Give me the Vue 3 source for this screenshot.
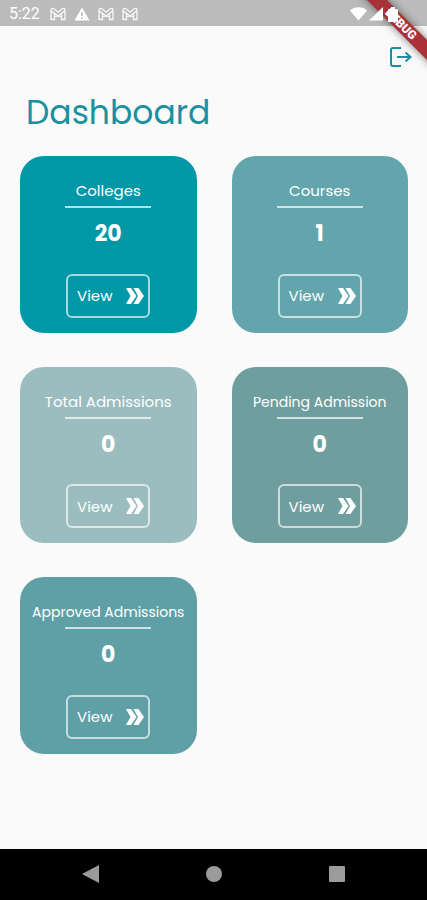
<script setup>
const cards = [
  { title: 'Colleges', count: 20, tone: 'deep' },
  { title: 'Courses', count: 1, tone: 'teal' },
  { title: 'Total Admissions', count: 0, tone: 'pale' },
  { title: 'Pending Admission', count: 0, tone: 'sage', small: true },
  { title: 'Approved Admissions', count: 0, tone: 'sea', small: true },
]
const notices = ['mail', 'warning', 'mail', 'mail']
</script>

<template>
  <div class="screen">
    <header class="status">
      <span class="time">5:22</span>
      <span class="notices">
        <svg v-for="(n, i) in notices" :key="i" width="16" height="14" viewBox="0 0 16 14" aria-hidden="true">
          <path
            v-if="n === 'mail'"
            d="M1 12.500V3.200C1 1.200 3 .8 4.200 2L8 5.200L11.800 2C13 .8 15 1.200 15 3.200V12.500H11.500V10L8 8.800L4.500 10V12.500Z M1.500 4L8 9 M14.500 4L8 9 M4.500 6.500V10 M11.500 6.500V10"
            fill="none" stroke="#f8f8f8" stroke-width="1.300" stroke-linejoin="round"
          />
          <path v-else d="M8 .5L15.500 13.500H.5Z M7.200 5V9H8.800V5Z M7.200 10.300V11.900H8.800V10.300Z" fill="#fff" fill-rule="evenodd" />
        </svg>
      </span>
      <span class="system">
        <svg width="17" height="14" viewBox="0 0 17 14" aria-hidden="true">
          <path d="M0 3.500C5-.8 12-.8 17 3.500L8.500 13.500Z" fill="#fff" />
        </svg>
        <svg width="14" height="14" viewBox="0 0 14 14" aria-hidden="true">
          <path d="M14 0V13.500H0Z" fill="#fff" />
        </svg>
        <svg class="battery" width="10" height="15" viewBox="0 0 10 15" aria-hidden="true">
          <path d="M3 0H7V2H9Q10 2 10 3V14Q10 15 9 15H1Q0 15 0 14V3Q0 2 1 2H3Z" fill="#fff" />
        </svg>
      </span>
    </header>
    <div class="corner"><span class="ribbon">DEBUG</span></div>

    <main class="content">
      <div class="toolbar">
        <button class="logout" type="button" aria-label="Log out">
          <svg width="24" height="22" viewBox="0 0 24 22" aria-hidden="true">
            <g fill="none" stroke="#1b91a0" stroke-width="2">
              <path d="M12 2H4Q2 2 2 4V18Q2 20 4 20H12" />
              <path d="M8 11H21M16.500 6.500L21.500 11L16.500 15.500" />
            </g>
          </svg>
        </button>
      </div>
      <h1>Dashboard</h1>
      <div class="grid">
        <section v-for="c in cards" :key="c.title" class="card" :class="c.tone">
          <h2 :class="{ small: c.small }">{{ c.title }}</h2>
          <span class="rule"></span>
          <strong>{{ c.count }}</strong>
          <button class="view" type="button">
            <span>View</span>
            <svg width="20" height="18" viewBox="0 0 20 18" aria-hidden="true">
              <path d="M1 1H6L11.500 9L6 17H1L5.500 9ZM8.500 1H13.500L19 9L13.500 17H8.500L13 9Z" fill="#fff" />
            </svg>
          </button>
        </section>
      </div>
    </main>

    <nav class="navbar">
      <button type="button" aria-label="Back">
        <svg width="18" height="18" viewBox="0 0 18 18"><path d="M0 9L17 0V18Z" fill="#9b9b9b" /></svg>
      </button>
      <button type="button" aria-label="Home">
        <svg width="18" height="18" viewBox="0 0 18 18"><circle cx="9" cy="9" r="8" fill="#9b9b9b" /></svg>
      </button>
      <button type="button" aria-label="Recent apps">
        <svg width="18" height="18" viewBox="0 0 18 18"><rect x="1" y="1" width="16" height="16" rx="1" fill="#9b9b9b" /></svg>
      </button>
    </nav>
  </div>
</template>

<style>
body {
  margin: 0;
}
</style>

<style scoped>
.screen {
  position: relative;
  display: flex;
  flex-direction: column;
  min-height: 100vh;
  background: #fafafa;
  font-family: Poppins, Inter, sans-serif;
}
button {
  display: flex;
  align-items: center;
  justify-content: center;
  padding: 0;
  border: 0;
  background: none;
  font: inherit;
  color: inherit;
}
.status {
  display: flex;
  align-items: center;
  box-sizing: border-box;
  height: 26px;
  padding: 2px 29px 0 9px;
  background: #bbb;
  color: #fff;
}
.time {
  font: 16px/20px Roboto, sans-serif;
}
.notices {
  display: flex;
  gap: 8px;
  margin-left: 10px;
}
.system {
  position: relative;
  z-index: 2;
  display: flex;
  align-items: center;
  gap: 2px;
  margin-left: auto;
}
.battery {
  margin-left: 3px;
}
.corner {
  position: absolute;
  top: 0;
  right: 0;
  z-index: 1;
  width: 80px;
  height: 80px;
  overflow: hidden;
  pointer-events: none;
}
.ribbon {
  position: absolute;
  top: 17px;
  right: -34px;
  width: 120px;
  background: #a83238;
  box-shadow: 0 0 8px rgba(0, 0, 0, 0.5);
  color: #fff;
  font: 900 12px/14px Roboto, sans-serif;
  text-align: center;
  transform: rotate(45deg);
}
.content {
  flex: 1;
  padding: 18px 19px 32px 20px;
}
.toolbar {
  display: flex;
  justify-content: flex-end;
}
.logout {
  width: 30px;
  height: 26px;
  margin-right: -8px;
}
h1 {
  margin: 19px 0 19px 6px;
  color: #1b91a0;
  font-size: 33px;
  font-weight: 400;
  line-height: 48px;
}
.grid {
  display: grid;
  grid-template-columns: 1fr 1fr;
  gap: 34px 35px;
}
.card {
  display: flex;
  flex-direction: column;
  align-items: center;
  box-sizing: border-box;
  min-width: 0;
  aspect-ratio: 1;
  padding: 24px 0 15px;
  border-radius: 24px;
  color: #fff;
}
.deep { background: #0097a7; }
.teal { background: #63a5ad; }
.pale { background: #9bbdc0; }
.sage { background: #6f9e9f; }
.sea { background: #5fa0a7; }
h2 {
  margin: 0;
  font-size: 15px;
  font-weight: 400;
  line-height: 22px;
  white-space: nowrap;
}
h2.small {
  font-size: 14px;
}
.rule {
  width: 86px;
  height: 2px;
  margin-top: 4px;
  background: rgba(255, 255, 255, 0.7);
}
strong {
  margin-top: 12px;
  font-size: 22px;
  font-weight: 700;
  line-height: 28px;
}
.view {
  box-sizing: border-box;
  width: 84px;
  height: 44px;
  gap: 13px;
  margin-top: auto;
  padding-left: 6px;
  border: 2px solid rgba(255, 255, 255, 0.65);
  border-radius: 6px;
  font-size: 15px;
}
.navbar {
  display: flex;
  justify-content: center;
  gap: 105px;
  padding: 16px 0 17px;
  background: #000;
}
</style>
